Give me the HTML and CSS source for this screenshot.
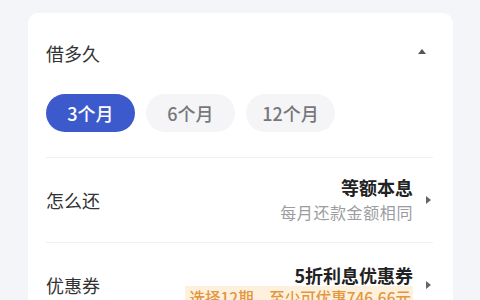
FILE: index.html
```html
<!DOCTYPE html>
<html lang="zh-CN">
<head>
<meta charset="utf-8">
<link rel="stylesheet" href="styles.css">
</head>
<body>
<div class="card">
  <section class="term">
    <div class="term-head">
      <span class="label">借多久</span>
      <span class="tri-up"></span>
    </div>
    <div class="pills">
      <span class="pill active">3个月</span>
      <span class="pill">6个月</span>
      <span class="pill">12个月</span>
    </div>
  </section>
  <div class="row">
    <span class="label">怎么还</span>
    <div class="right">
      <div class="value">
        <div class="main">等额本息</div>
        <div class="sub">每月还款金额相同</div>
      </div>
      <span class="tri-right"></span>
    </div>
  </div>
  <div class="row">
    <span class="label">优惠券</span>
    <div class="right">
      <div class="value">
        <div class="main">5折利息优惠券</div>
        <div class="tag">选择12期，至少可优惠746.66元</div>
      </div>
      <span class="tri-right"></span>
    </div>
  </div>
</div>
</body>
</html>
```
FILE: styles.css
```css
* { box-sizing: border-box; }
html, body {
  margin: 0;
  padding: 0;
  background: #f4f5f9;
  font-family: "Noto Sans CJK SC", "Noto Sans", sans-serif;
  overflow: hidden;
}
.card {
  margin: 13px 27px 0 28px;
  background: #ffffff;
  border-radius: 10px 10px 0 0;
  padding: 0 20px 0 18px;
  height: 300px;
}
.term {
  padding-top: 28px;
  padding-bottom: 25px;
  border-bottom: 1px solid #f0f0f2;
}
.term-head {
  display: flex;
  align-items: center;
  justify-content: space-between;
  height: 24px;
}
.label {
  font-size: 18px;
  line-height: 24px;
  color: #333333;
}
.tri-up {
  width: 0;
  height: 0;
  border-left: 4px solid transparent;
  border-right: 4px solid transparent;
  border-bottom: 5px solid #555555;
  margin-right: 7px;
  margin-top: -3px;
}
.pills {
  display: flex;
  gap: 11px;
  margin-top: 29px;
}
.pill {
  width: 89px;
  height: 38px;
  border-radius: 19px;
  background: #f5f5f7;
  color: #77777b;
  font-size: 18px;
  font-weight: 500;
  display: flex;
  align-items: center;
  justify-content: center;
}
.pill.active {
  background: #3d5acd;
  color: #ffffff;
}
.row {
  height: 85px;
  display: flex;
  align-items: center;
  justify-content: space-between;
  border-bottom: 1px solid #f0f0f2;
}
.right {
  display: flex;
  align-items: center;
}
.value {
  display: flex;
  flex-direction: column;
  align-items: flex-end;
}
.main {
  font-size: 18px;
  line-height: 24px;
  font-weight: 700;
  color: #222222;
}
.sub {
  font-size: 16px;
  line-height: 26px;
  letter-spacing: 0.6px;
  color: #9c9ca0;
}
.tag {
  font-size: 15.5px;
  line-height: 22px;
  font-weight: 500;
  color: #e3963d;
  background: #fdf1de;
  padding: 0 2px 0 5px;
  margin-top: -1px;
}
.tri-right {
  width: 0;
  height: 0;
  border-top: 4px solid transparent;
  border-bottom: 4px solid transparent;
  border-left: 5px solid #666666;
  margin-left: 13px;
  margin-right: 2px;
}
```
